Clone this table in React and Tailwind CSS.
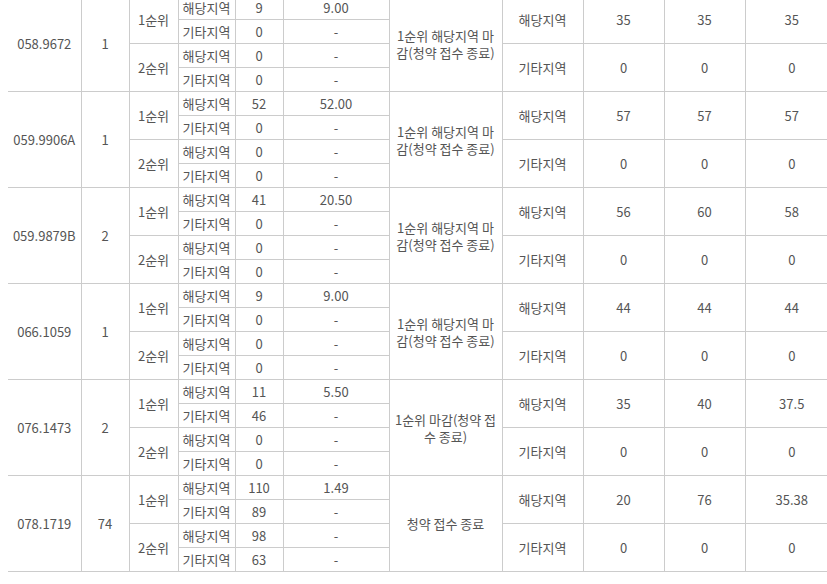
import React from "react";

const groups = [
  {
    size: "058.9672",
    units: "1",
    counts: [
      ["9", "9.00"],
      ["0", "-"],
      ["0", "-"],
      ["0", "-"],
    ],
    status: "1순위 해당지역 마감(청약 접수 종료)",
    scores: [
      ["35", "35", "35"],
      ["0", "0", "0"],
    ],
  },
  {
    size: "059.9906A",
    units: "1",
    counts: [
      ["52", "52.00"],
      ["0", "-"],
      ["0", "-"],
      ["0", "-"],
    ],
    status: "1순위 해당지역 마감(청약 접수 종료)",
    scores: [
      ["57", "57", "57"],
      ["0", "0", "0"],
    ],
  },
  {
    size: "059.9879B",
    units: "2",
    counts: [
      ["41", "20.50"],
      ["0", "-"],
      ["0", "-"],
      ["0", "-"],
    ],
    status: "1순위 해당지역 마감(청약 접수 종료)",
    scores: [
      ["56", "60", "58"],
      ["0", "0", "0"],
    ],
  },
  {
    size: "066.1059",
    units: "1",
    counts: [
      ["9", "9.00"],
      ["0", "-"],
      ["0", "-"],
      ["0", "-"],
    ],
    status: "1순위 해당지역 마감(청약 접수 종료)",
    scores: [
      ["44", "44", "44"],
      ["0", "0", "0"],
    ],
  },
  {
    size: "076.1473",
    units: "2",
    counts: [
      ["11", "5.50"],
      ["46", "-"],
      ["0", "-"],
      ["0", "-"],
    ],
    status: "1순위 마감(청약 접수 종료)",
    scores: [
      ["35", "40", "37.5"],
      ["0", "0", "0"],
    ],
  },
  {
    size: "078.1719",
    units: "74",
    counts: [
      ["110", "1.49"],
      ["89", "-"],
      ["98", "-"],
      ["63", "-"],
    ],
    status: "청약 접수 종료",
    scores: [
      ["20", "76", "35.38"],
      ["0", "0", "0"],
    ],
  },
];

const areas = ["해당지역", "기타지역", "해당지역", "기타지역"];

// shared cell style: thin grey grid, centred text
const td = "border border-[#cccccc] p-0 text-center align-middle";

const App = () => {
  return (
    <div
      className="w-[827px] h-[584px] overflow-hidden bg-white text-[13px] leading-[17px] text-[#555555]"
      style={{ fontFamily: '"Noto Sans CJK KR", "Noto Sans", sans-serif' }}
    >
      <table className="ml-[8px] -mt-[5px] border-collapse table-fixed w-[830px]">
        <colgroup>
          <col className="w-[73px]" />
          <col className="w-[48px]" />
          <col className="w-[49px]" />
          <col className="w-[57px]" />
          <col className="w-[48px]" />
          <col className="w-[106px]" />
          <col className="w-[113px]" />
          <col className="w-[81px]" />
          <col className="w-[81px]" />
          <col className="w-[81px]" />
          <col className="w-[93px]" />
        </colgroup>
        <tbody>
          {groups.map((g) =>
            g.counts.map((c, i) => (
              <tr key={g.size + i} className="h-[24px]">
                {i === 0 && (
                  <>
                    <td rowSpan={4} className={`${td} border-l-0`}>
                      {g.size}
                    </td>
                    <td rowSpan={4} className={td}>
                      {g.units}
                    </td>
                  </>
                )}
                {i % 2 === 0 && (
                  <td rowSpan={2} className={td}>
                    {i === 0 ? "1순위" : "2순위"}
                  </td>
                )}
                <td className={td}>{areas[i]}</td>
                <td className={td}>{c[0]}</td>
                <td className={td}>{c[1]}</td>
                {i === 0 && (
                  <td rowSpan={4} className={`${td} px-[5px]`}>
                    {g.status}
                  </td>
                )}
                {i % 2 === 0 && (
                  <>
                    <td rowSpan={2} className={td}>
                      {i === 0 ? "해당지역" : "기타지역"}
                    </td>
                    {g.scores[i / 2].map((s, k) => (
                      <td key={k} rowSpan={2} className={`${td} ${k === 2 ? "border-r-0" : ""}`}>
                        {s}
                      </td>
                    ))}
                  </>
                )}
              </tr>
            ))
          )}
        </tbody>
      </table>
    </div>
  );
};

export default App;
